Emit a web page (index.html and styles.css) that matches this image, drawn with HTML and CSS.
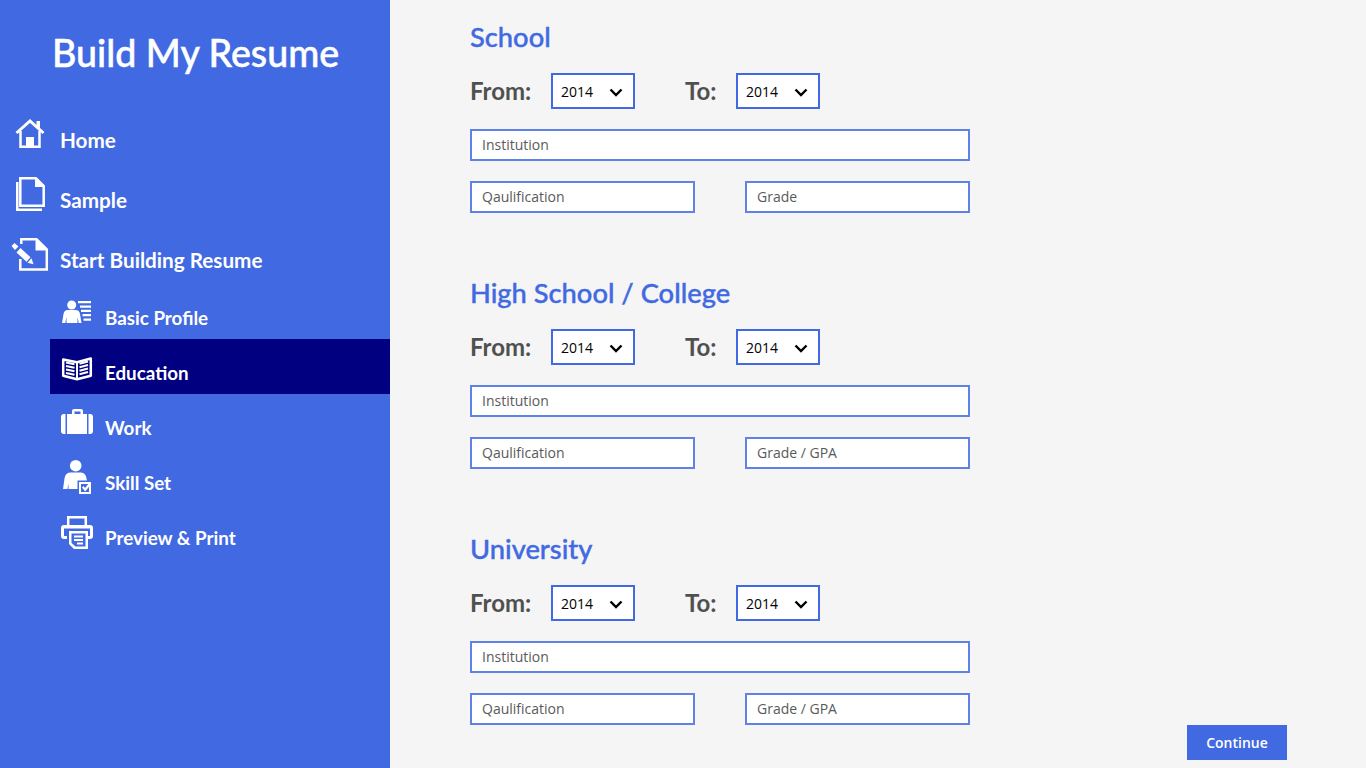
FILE: index.html
```html
<!DOCTYPE html>
<html>
<head>
    <meta name="viewport" content="width=device-width, initial-scale=1.0">
    <title>Build My Resume</title>
    <link rel="stylesheet" href="styles.css">
</head>
<body>
    <div class="sidebar">
        <h1 class="brand">Build My Resume</h1>

        <div class="nav">
            <a class="nav-item">
                <svg class="nav-icon" viewBox="0 0 30 38"><path d="M1.500 18 15 6l13.500 12" fill="none" stroke="#fff" stroke-width="3"/><path d="M21.500 6h3.500v7h-3.500z" fill="#fff"/><path d="M5.500 16v15.800h19V16" fill="none" stroke="#fff" stroke-width="2.500"/><path d="M11 22h8v10h-8z" fill="#fff"/></svg>
                <span>Home</span>
            </a>
            <a class="nav-item">
                <svg class="nav-icon" viewBox="0 0 30 38"><path d="M5.300 3.200h15.500l7.900 7.900v19.700H5.300z" fill="none" stroke="#fff" stroke-width="2.500"/><path d="M20 3h2l7 7v2h-9z" fill="#fff"/><path d="M1 7h2.500v26.500H27V36H1z" fill="#fff"/></svg>
                <span>Sample</span>
            </a>
            <a class="nav-item nav-item-wide">
                <svg class="nav-icon-wide" viewBox="0 0 38 38"><path d="M10.300 9V4.200h15.200l10.300 10.300v20H9.300V24" fill="none" stroke="#fff" stroke-width="2.500"/><path d="M24.500 4h2l10 10v1.500h-12z" fill="#fff"/><path d="M0.500 11 3.500 8l4 3.500L4 15z" fill="#fff"/><path d="M9.500 13.100 19.500 22.300 15.500 26.700 5.500 17.500zM20.500 23.300 22.500 29.200 16.500 27.700z" fill="#fff"/></svg>
                <span>Start Building Resume</span>
            </a>
        </div>

        <div class="subnav">
            <a class="sub-item">
                <svg class="sub-icon" viewBox="0 0 32 34"><circle cx="10.700" cy="8" r="4.500" fill="#fff"/><path d="M1 26l1.500-9q.6-4 4.500-4h7.500q3.900 0 4.500 4l1.500 9h-2.800l-1.200-6v6H5.500v-6l-1.200 6z" fill="#fff"/><path d="M17 4h13v2.200H17zM19 8.500h11v2.200H19zM20 12.800h10V15H20zM21.500 17H30v2.200h-8.500zM22.500 21.500H30v2.200h-7.500z" fill="#fff"/></svg>
                <span>Basic Profile</span>
            </a>
            <a class="sub-item active">
                <svg class="sub-icon" viewBox="0 0 32 34"><path d="M2.200 7.500 16 10.300 29.800 6.500v17.200L16 27.300 2.200 23.700z" fill="none" stroke="#fff" stroke-width="2.500" stroke-linejoin="round"/><path d="M15 10h2v17h-2z" fill="#fff"/><path d="M5 10.500 13.500 12.300M5 14 13.500 15.800M5 17.500 13.500 19.300M5 21 13.500 22.800M27 9.500 18.500 11.800M27 13 18.500 15.300M27 16.500 18.500 18.800M27 20 18.500 22.300" fill="none" stroke="#fff" stroke-width="2"/></svg>
                <span>Education</span>
            </a>
            <a class="sub-item">
                <svg class="sub-icon" viewBox="0 0 32 34"><path d="M4.500 7v20H3q-3 0-3-3V10q0-3 3-3zM27.500 7v20H29q3 0 3-3V10q0-3-3-3zM6 7h5V4q0-2 2-2h7q2 0 2 2v3h4v20H6zM13.500 7h6V4.500h-6z" fill="#fff" fill-rule="evenodd"/></svg>
                <span>Work</span>
            </a>
            <a class="sub-item">
                <svg class="sub-icon" viewBox="0 0 32 34"><circle cx="14.700" cy="3.700" r="5.800" fill="#fff"/><path d="M2 27l1.500-10.500q.8-5.500 5.500-6h11q4.700.5 5.500 6l.4 2H16.500V27H7.500v-5.500L6.500 27z" fill="#fff"/><path d="M18 20h12v12H18zM20 22v8h8v-8z" fill="#fff" fill-rule="evenodd"/><path d="M21 25.500l1.500-1.500 1.500 2 4.500-5.500 1.700 1.500-6 7.500z" fill="#fff"/></svg>
                <span>Skill Set</span>
            </a>
            <a class="sub-item">
                <svg class="sub-icon" viewBox="0 0 32 34"><path d="M7.200 9V.2h17.600V9" fill="none" stroke="#fff" stroke-width="2.500"/><path d="M3 8h26q3 0 3 3v8q0 3-3 3h-2v-3h2V11.500H3V19h3v3H3q-3 0-3-3v-8q0-3 3-3z" fill="#fff"/><path d="M8 14h19v18H13l-5-5zM10.500 16.500v9.500l4 3.500h10v-13z" fill="#fff" fill-rule="evenodd"/><path d="M13 18.500h9v2h-9zM13 22h9v2h-9zM16 25.500h6v2h-6z" fill="#fff"/></svg>
                <span>Preview &amp; Print</span>
            </a>
        </div>
    </div>

    <div class="main">
        <div class="section">
            <h2>School</h2>
            <div class="dates">
                <label class="date-label">From:</label>
                <div class="year"><select><option>2014</option></select><svg class="chevron" viewBox="0 0 14 9"><path d="M1.500 1.500 7 7l5.500-5.500" fill="none" stroke="#000" stroke-width="2.400"/></svg></div>
                <label class="date-label date-to">To:</label>
                <div class="year"><select><option>2014</option></select><svg class="chevron" viewBox="0 0 14 9"><path d="M1.500 1.500 7 7l5.500-5.500" fill="none" stroke="#000" stroke-width="2.400"/></svg></div>
            </div>
            <input class="field field-full" type="text" placeholder="Institution">
            <div class="field-row">
                <input class="field" type="text" placeholder="Qaulification">
                <input class="field" type="text" placeholder="Grade">
            </div>
        </div>

        <div class="section">
            <h2>High School / College</h2>
            <div class="dates">
                <label class="date-label">From:</label>
                <div class="year"><select><option>2014</option></select><svg class="chevron" viewBox="0 0 14 9"><path d="M1.500 1.500 7 7l5.500-5.500" fill="none" stroke="#000" stroke-width="2.400"/></svg></div>
                <label class="date-label date-to">To:</label>
                <div class="year"><select><option>2014</option></select><svg class="chevron" viewBox="0 0 14 9"><path d="M1.500 1.500 7 7l5.500-5.500" fill="none" stroke="#000" stroke-width="2.400"/></svg></div>
            </div>
            <input class="field field-full" type="text" placeholder="Institution">
            <div class="field-row">
                <input class="field" type="text" placeholder="Qaulification">
                <input class="field" type="text" placeholder="Grade / GPA">
            </div>
        </div>

        <div class="section section-last">
            <h2>University</h2>
            <div class="dates">
                <label class="date-label">From:</label>
                <div class="year"><select><option>2014</option></select><svg class="chevron" viewBox="0 0 14 9"><path d="M1.500 1.500 7 7l5.500-5.500" fill="none" stroke="#000" stroke-width="2.400"/></svg></div>
                <label class="date-label date-to">To:</label>
                <div class="year"><select><option>2014</option></select><svg class="chevron" viewBox="0 0 14 9"><path d="M1.500 1.500 7 7l5.500-5.500" fill="none" stroke="#000" stroke-width="2.400"/></svg></div>
            </div>
            <input class="field field-full" type="text" placeholder="Institution">
            <div class="field-row">
                <input class="field" type="text" placeholder="Qaulification">
                <input class="field" type="text" placeholder="Grade / GPA">
            </div>
        </div>

        <div class="actions">
            <button class="btn-continue">Continue</button>
        </div>
    </div>
</body>
</html>
```

FILE: styles.css
```css
:root {
    --primary-color: #4169E1;
    --active-color: #000080;
    --background-color: #F5F5F5;
    --text-color: #505050;
}

body {
    font-family: 'Open Sans', 'Noto Sans', sans-serif;
    background-color: var(--background-color);
    margin: 0;
    display: flex;
    height: 768px;
    overflow: hidden;
}

.sidebar {
    width: 390px;
    flex: none;
    background-color: var(--primary-color);
    color: white;
}

.brand {
    font-family: 'Lato', sans-serif;
    font-weight: 500;
    font-size: 37.6px;
    -webkit-text-stroke: 0.5px white;
    line-height: 46px;
    margin: 30px 0 0;
    padding-left: 52px;
}

.nav {
    margin-top: 35px;
}

.nav-item {
    display: flex;
    height: 60px;
    padding-left: 15px;
    font-family: 'Lato', sans-serif;
    font-weight: 700;
    font-size: 20.7px;
}

.nav-item span {
    margin-top: 14px;
    margin-left: 15px;
    line-height: 30px;
}

.nav-icon {
    width: 30px;
    height: 38px;
    margin-top: 4px;
}

.nav-item-wide {
    padding-left: 11px;
}

.nav-item-wide span {
    margin-left: 11px;
}

.nav-icon-wide {
    width: 38px;
    height: 38px;
    margin-top: 4px;
}

.subnav {
    margin-left: 50px;
    margin-top: -7px;
}

.sub-item {
    display: flex;
    height: 55px;
    padding-left: 11px;
    font-family: 'Lato', sans-serif;
    font-weight: 700;
    font-size: 18.8px;
}

.sub-item span {
    margin-left: 12px;
    margin-top: 20px;
    line-height: 28px;
}

.sub-item.active {
    background-color: var(--active-color);
}

.sub-icon {
    width: 32px;
    height: 34px;
    margin-top: 13px;
    overflow: visible;
}

.main {
    flex: 1;
    padding-left: 80px;
}

.section {
    height: 256px;
    width: 500px;
}

.section h2 {
    font-family: 'Lato', sans-serif;
    font-weight: 500;
    font-size: 27.3px;
    -webkit-text-stroke: 0.4px var(--primary-color);
    line-height: 34px;
    color: var(--primary-color);
    margin: 0;
    padding-top: 20px;
}

.dates {
    display: flex;
    align-items: center;
    margin-top: 19px;
}

.date-label {
    font-family: 'Lato', sans-serif;
    font-weight: 700;
    font-size: 24px;
    color: var(--text-color);
    width: 81px;
    padding-bottom: 2px;
}

.date-to {
    margin-left: 50px;
    width: 51px;
}

.year {
    position: relative;
    width: 84px;
    height: 36px;
}

.year select {
    appearance: none;
    width: 100%;
    height: 100%;
    box-sizing: border-box;
    border: 2px solid var(--primary-color);
    border-radius: 0;
    background: white;
    color: black;
    font-family: inherit;
    font-size: 14px;
    padding: 0 0 0 8px;
}

.chevron {
    position: absolute;
    right: 12px;
    top: 15px;
    width: 14px;
    height: 9px;
}

.field {
    box-sizing: border-box;
    width: 225px;
    height: 32px;
    border: 2px solid #5F82E6;
    border-radius: 0;
    background: white;
    font-family: inherit;
    font-size: 14px;
    padding: 0 10px 2px;
}

.field::placeholder {
    color: #5A5A5A;
    opacity: 1;
}

.field-full {
    display: block;
    width: 500px;
    margin-top: 20px;
}

.field-row {
    display: flex;
    justify-content: space-between;
    margin-top: 20px;
}

.section-last {
    height: 213px;
}

.actions {
    display: flex;
    justify-content: flex-end;
    margin-right: 79px;
}

.btn-continue {
    width: 100px;
    height: 35px;
    background-color: var(--primary-color);
    color: white;
    border: none;
    font-family: inherit;
    font-size: 14px;
    font-weight: 600;
}
```
